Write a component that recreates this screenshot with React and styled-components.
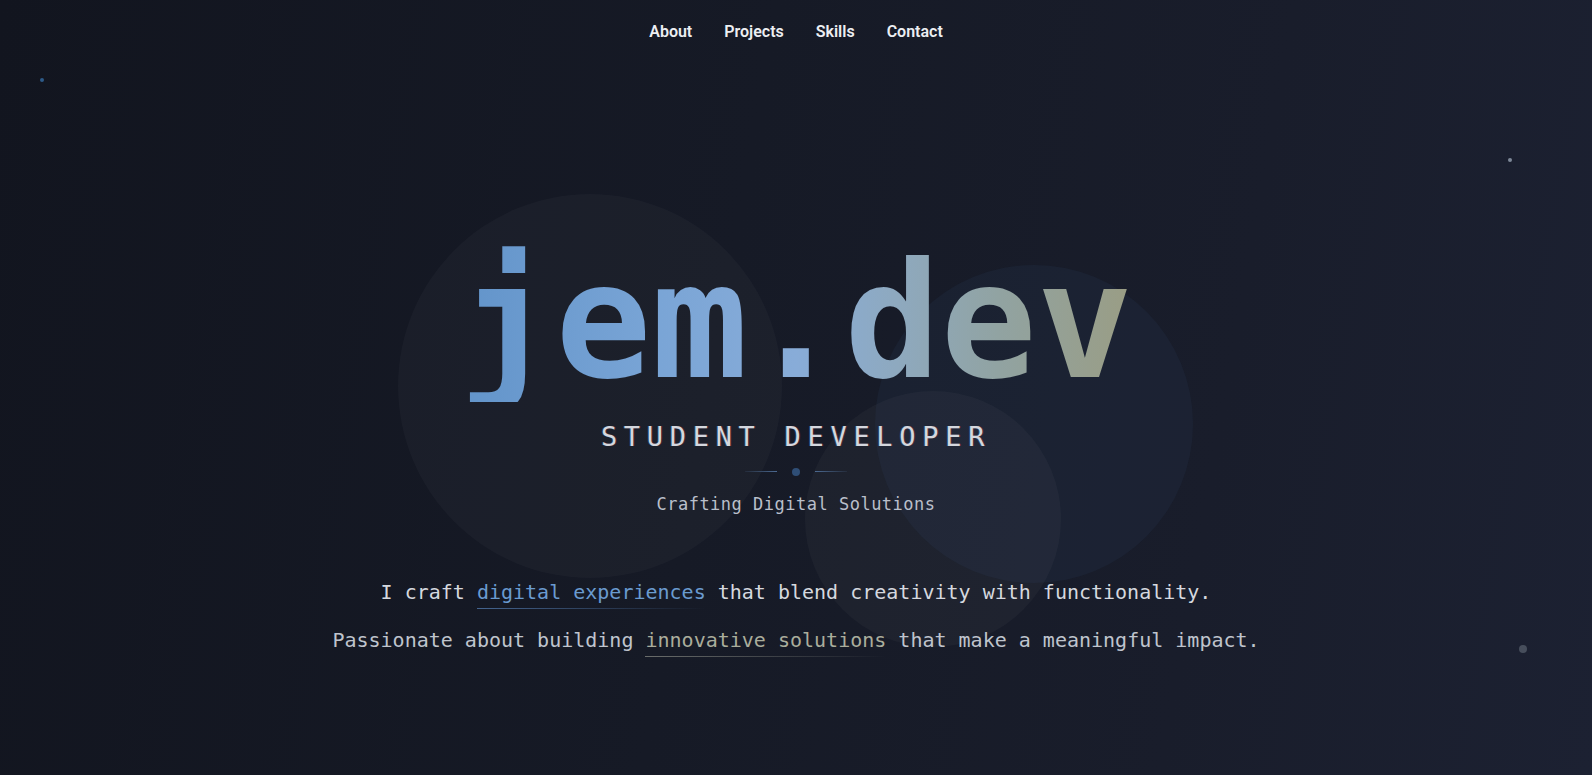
import React from 'react';
import styled, { createGlobalStyle } from 'styled-components';

const GlobalStyle = createGlobalStyle`
  * { box-sizing: border-box; }
  html, body { margin: 0; padding: 0; }
  body {
    background: #151925;
    font-family: "DejaVu Sans Mono", "Liberation Mono", monospace;
  }
`;

const Page = styled.div`
  position: relative;
  min-height: 100vh;
  overflow: hidden;
  display: flex;
  flex-direction: column;
  background: linear-gradient(100deg, #12151f 0%, #161a26 45%, #191d2b 75%, #1c2132 100%);
`;

const Blob = styled.div`
  position: absolute;
  border-radius: 50%;
  left: ${p => p.x - p.r}px;
  top: ${p => p.y - p.r}px;
  width: ${p => p.r * 2}px;
  height: ${p => p.r * 2}px;
  background: ${p => p.fill};
  pointer-events: none;
`;

const Particle = styled.span`
  position: absolute;
  left: ${p => p.x}px;
  top: ${p => p.y}px;
  width: ${p => p.size}px;
  height: ${p => p.size}px;
  border-radius: 50%;
  background: ${p => p.color};
`;

const Nav = styled.nav`
  position: relative;
  z-index: 2;
  display: flex;
  justify-content: center;
  gap: 32px;
  padding-top: 23px;
`;

const NavLink = styled.a`
  font-family: Roboto, "Liberation Sans", sans-serif;
  font-size: 16px;
  font-weight: 600;
  color: #eceef2;
  text-decoration: none;
  line-height: 18.75px;
`;

const Hero = styled.main`
  position: relative;
  z-index: 1;
  display: flex;
  flex-direction: column;
  align-items: center;
  padding-top: 200px;
`;

const Title = styled.h1`
  margin: 0;
  font-family: "DejaVu Sans Mono", monospace;
  font-weight: 700;
  font-size: 160px;
  line-height: 1;
  background: linear-gradient(90deg, #6294ca 0%, #7aa5d6 30%, #88acd8 50%, #8ea9bf 65%, #91a3a2 80%, #9a9d84 100%);
  -webkit-background-clip: text;
  background-clip: text;
  color: transparent;
`;

const Role = styled.h2`
  margin: 19px 0 0;
  font-family: "DejaVu Sans Mono", monospace;
  font-weight: 400;
  font-size: 27px;
  line-height: 32px;
  letter-spacing: 6.7px;
  color: #d4d7de;
  text-shadow: 1px 0 rgba(255, 60, 90, 0.22), -1px 0 rgba(80, 200, 255, 0.22);
`;

const Divider = styled.div`
  display: flex;
  align-items: center;
  gap: 15px;
  margin-top: 15px;
  height: 8px;
`;

const Line = styled.span`
  width: 32px;
  height: 1px;
  background: linear-gradient(${p => (p.flip ? '90deg' : '270deg')}, #4c6a92, rgba(76, 106, 146, 0.15));
`;

const Dot = styled.span`
  width: 8px;
  height: 8px;
  border-radius: 50%;
  background: #2f4e76;
`;

const Tagline = styled.p`
  margin: 16px 0 0;
  font-size: 17px;
  line-height: 24px;
  letter-spacing: 0.5px;
  color: #b9bfca;
`;

const Intro = styled.div`
  margin-top: 52px;
  text-align: center;
  font-size: 20px;
`;

const IntroLine = styled.p`
  margin: 0;
  line-height: 48px;
  color: ${p => p.color};
`;

const Accent = styled.span`
  color: ${p => p.color};
  padding-bottom: 5px;
  background-image: linear-gradient(90deg, ${p => p.line}, transparent);
  background-size: 100% 1px;
  background-position: left bottom;
  background-repeat: no-repeat;
`;

export default function App() {
  return (
    <>
      <GlobalStyle />
      <Page>
        <Blob x={590} y={386} r={192} fill="rgba(255, 255, 255, 0.028)" />
        <Blob x={1034} y={424} r={159} fill="rgba(70, 110, 170, 0.07)" />
        <Blob x={933} y={519} r={128} fill="rgba(255, 255, 255, 0.032)" />
        <Particle x={40} y={78} size={4} color="#2d5a88" />
        <Particle x={1508} y={158} size={4} color="#7e8898" />
        <Particle x={1519} y={645} size={8} color="#474e5c" />

        <Nav>
          <NavLink href="#about">About</NavLink>
          <NavLink href="#projects">Projects</NavLink>
          <NavLink href="#skills">Skills</NavLink>
          <NavLink href="#contact">Contact</NavLink>
        </Nav>

        <Hero>
          <Title>jem.dev</Title>
          <Role>STUDENT DEVELOPER</Role>
          <Divider>
            <Line />
            <Dot />
            <Line flip />
          </Divider>
          <Tagline>Crafting Digital Solutions</Tagline>
          <Intro>
            <IntroLine color="#d5d8df">
              I craft <Accent color="#6a9bd0" line="#44648f">digital experiences</Accent> that blend creativity with functionality.
            </IntroLine>
            <IntroLine color="#bfc4cd">
              Passionate about building <Accent color="#aaad9c" line="#6a6d6b">innovative solutions</Accent> that make a meaningful impact.
            </IntroLine>
          </Intro>
        </Hero>
      </Page>
    </>
  );
}
